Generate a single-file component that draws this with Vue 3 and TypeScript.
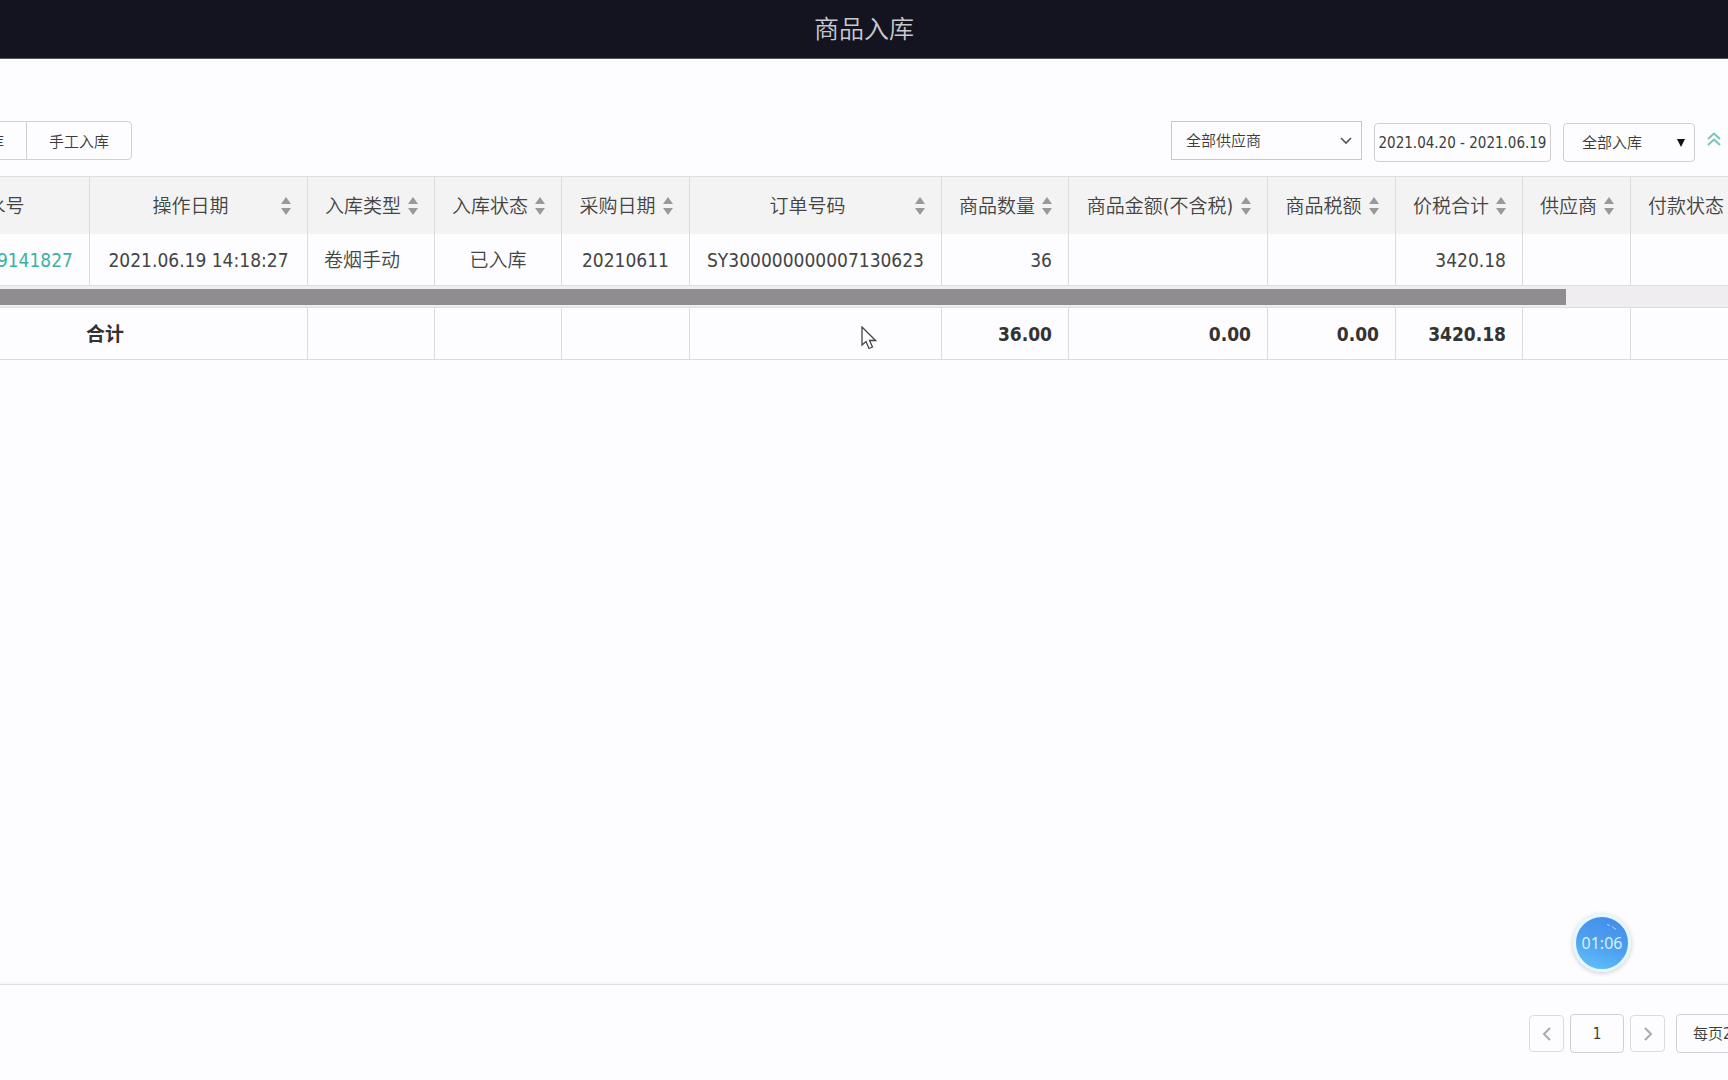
<script setup lang="ts">
import { ref } from 'vue'

interface Column {
  key: string
  title: string
  width?: number
  align: 'left' | 'center' | 'right'
  value: string
  total: string
  sortable: boolean
}

const columns: Column[] = [
  { key: 'serial', title: '流水号', width: 187, align: 'right', value: '20210619141827', total: '', sortable: false },
  { key: 'time', title: '操作日期', width: 218, align: 'center', value: '2021.06.19 14:18:27', total: '', sortable: true },
  { key: 'type', title: '入库类型', width: 127, align: 'left', value: '卷烟手动', total: '', sortable: true },
  { key: 'state', title: '入库状态', width: 127, align: 'center', value: '已入库', total: '', sortable: true },
  { key: 'date', title: '采购日期', width: 128, align: 'center', value: '20210611', total: '', sortable: true },
  { key: 'order', title: '订单号码', width: 252, align: 'center', value: 'SY300000000007130623', total: '', sortable: true },
  { key: 'count', title: '商品数量', width: 127, align: 'right', value: '36', total: '36.00', sortable: true },
  { key: 'amount', title: '商品金额(不含税)', width: 199, align: 'right', value: '', total: '0.00', sortable: true },
  { key: 'tax', title: '商品税额', width: 128, align: 'right', value: '', total: '0.00', sortable: true },
  { key: 'sum', title: '价税合计', width: 127, align: 'right', value: '3420.18', total: '3420.18', sortable: true },
  { key: 'supplier', title: '供应商', width: 108, align: 'center', value: '', total: '', sortable: true },
  { key: 'payment', title: '付款状态', align: 'center', value: '', total: '', sortable: true },
]

const totals = columns.slice(2)
const supplier = ref('全部供应商')
const period = ref('2021.04.20 - 2021.06.19')
const kind = ref('全部入库')
const page = ref('1')
const pageSize = ref('每页20条')
</script>

<template>
  <div class="app">
    <header class="titlebar"><h1>商品入库</h1></header>

    <div class="toolbar">
      <div class="actions">
        <button type="button">订单入库</button>
        <button type="button">手工入库</button>
      </div>
      <form class="filters" @submit.prevent>
        <div class="picker supplier">
          <select v-model="supplier" aria-label="供应商">
            <option>全部供应商</option>
          </select>
          <svg width="12" height="8" viewBox="0 0 12 8"><path d="M1 1l5 5 5-5" fill="none" stroke="#555" stroke-width="1.600" /></svg>
        </div>
        <input v-model="period" class="period" type="text" aria-label="日期范围" />
        <div class="picker kind">
          <select v-model="kind" aria-label="入库类型">
            <option>全部入库</option>
          </select>
          <svg width="8" height="8" viewBox="0 0 8 8"><path d="M0 0h8L4 8z" fill="#111" /></svg>
        </div>
        <button type="button" class="collapse" aria-label="收起">
          <svg width="14" height="14" viewBox="0 0 14 14"><path d="M1 7l6-5.500 6 5.500M1 13l6-5.500 6 5.500" fill="none" stroke="#79c5bd" stroke-width="2" /></svg>
        </button>
      </form>
    </div>

    <main class="content">
      <div class="grid">
        <table>
          <colgroup>
            <col v-for="c in columns" :key="c.key" :style="c.width ? { width: c.width + 'px' } : {}" />
          </colgroup>
          <thead>
            <tr>
              <th v-for="c in columns" :key="c.key" scope="col">
                <div class="head">
                  <span class="label">{{ c.title }}</span>
                  <svg v-if="c.sortable" width="10" height="18" viewBox="0 0 10 18"><path d="M0 7l5-7 5 7zM0 11h10l-5 7z" fill="#999" /></svg>
                </div>
              </th>
            </tr>
          </thead>
          <tbody>
            <tr>
              <td v-for="c in columns" :key="c.key" :class="c.align">
                <a v-if="c.key === 'serial'" href="#">{{ c.value }}</a>
                <template v-else>{{ c.value }}</template>
              </td>
            </tr>
          </tbody>
        </table>
      </div>
      <div class="track"><div class="thumb"></div></div>
      <div class="grid totals">
        <table>
          <colgroup>
            <col v-for="c in columns" :key="c.key" :style="c.width ? { width: c.width + 'px' } : {}" />
          </colgroup>
          <tbody>
            <tr>
              <th colspan="2" scope="row">合计</th>
              <td v-for="c in totals" :key="c.key" class="right">{{ c.total }}</td>
            </tr>
          </tbody>
        </table>
      </div>
    </main>

    <footer class="pager">
      <button type="button" class="step" aria-label="上一页">
        <svg width="10" height="14" viewBox="0 0 10 14"><path d="M8 1L2 7l6 6" fill="none" stroke="#aaa" stroke-width="2" /></svg>
      </button>
      <input v-model="page" class="page" type="text" aria-label="页码" />
      <button type="button" class="step" aria-label="下一页">
        <svg width="10" height="14" viewBox="0 0 10 14"><path d="M2 1l6 6-6 6" fill="none" stroke="#aaa" stroke-width="2" /></svg>
      </button>
      <select v-model="pageSize" class="size" aria-label="每页条数">
        <option>每页20条</option>
      </select>
    </footer>

    <div class="timer">
      <svg class="shine" width="12" height="8" viewBox="0 0 12 8"><path d="M1 1.500l3 1M6 3.500l4 3" fill="none" stroke="#a9d6fb" stroke-width="1" /></svg>
      01:06
    </div>
    <svg class="cursor" width="16" height="24" viewBox="0 0 16 24"><path d="M1 1v18l4-3.500 3 7 3.500-1.500-3-6.500h6z" fill="#fdfcfe" stroke="#444" stroke-width="1.300" /></svg>
  </div>
</template>

<style>
body {
  margin: 0;
  background: #fdfcfe;
}
</style>

<style scoped>
.app {
  position: relative;
  display: flex;
  flex-direction: column;
  min-height: 100vh;
  overflow: hidden;
  color: #444;
  font-family: 'DejaVu Sans Condensed', 'Noto Sans CJK SC', sans-serif;
  font-size: 19px;
  font-weight: 350;
}
button,
input,
select {
  box-sizing: border-box;
  margin: 0;
  border: 1px solid #d0d0d4;
  border-radius: 4px;
  background: #fdfcfe;
  color: #3c3c3c;
  font-family: inherit;
  font-size: 15px;
  font-weight: 350;
  appearance: none;
}
svg {
  flex: none;
  display: block;
}
.titlebar {
  display: flex;
  align-items: center;
  justify-content: center;
  box-sizing: border-box;
  height: 59px;
  padding-top: 2px;
  border-bottom: 1px solid #55555c;
  background: #141420;
}
h1 {
  margin: 0;
  color: #c8c8ce;
  font-size: 25px;
  font-weight: 350;
  line-height: 36px;
}
.toolbar {
  display: flex;
  justify-content: space-between;
  align-items: flex-start;
  padding: 62px 7px 14px 0;
}
.actions {
  display: flex;
  margin-left: -79px;
}
.actions button {
  width: 106px;
  height: 39px;
  padding: 0;
  border-radius: 0;
}
.actions button + button {
  margin-left: -1px;
  border-radius: 0 4px 4px 0;
}
.filters {
  display: flex;
  align-items: flex-end;
  gap: 12px;
}
.picker {
  position: relative;
}
.picker select {
  width: 100%;
  height: 39px;
}
.picker svg {
  position: absolute;
  top: 16px;
  right: 10px;
  pointer-events: none;
}
.supplier {
  width: 191px;
  align-self: flex-start;
}
.supplier select {
  border-radius: 0;
  padding: 0 14px;
  border-color: #c8c8cc;
}
.period {
  width: 177px;
  height: 39px;
  padding: 0;
  text-align: center;
}
.kind {
  width: 132px;
}
.kind select {
  padding: 0 18px;
}
.filters > * {
  margin-top: 2px;
}
.filters .supplier {
  margin-top: 0;
}
.filters .collapse {
  display: flex;
  align-self: flex-start;
  margin-top: 11px;
  padding: 0;
  border: 0;
}
.content {
  flex: 1;
}
.grid {
  overflow: hidden;
  border-top: 1px solid #dededf;
}
table {
  width: calc(100% + 127px);
  margin-left: -97px;
  table-layout: fixed;
  border-collapse: separate;
  border-spacing: 0;
}
th,
td {
  box-sizing: border-box;
  padding: 0 16px;
  border-right: 1px solid #dcdcdf;
  white-space: nowrap;
  line-height: 28px;
}
thead th {
  height: 57px;
  background: #f3f3f3;
  font-weight: 350;
}
td {
  height: 51px;
}
.head {
  display: flex;
  align-items: center;
  gap: 6px;
}
.label {
  flex: 1;
  text-align: center;
}
.left {
  text-align: left;
}
.center {
  text-align: center;
}
.right {
  text-align: right;
}
a {
  color: #3bb0a5;
  text-decoration: none;
}
.track {
  padding: 3px 0 2px;
  border-top: 1px solid #dededf;
  background: #efedf0;
}
.thumb {
  width: 90.600%;
  height: 16px;
  background: #8f8d90;
}
.totals {
  border-bottom: 1px solid #dcdcdf;
  color: #333;
}
.totals th,
.totals td {
  font-weight: 700;
}
.pager {
  display: flex;
  align-items: flex-start;
  justify-content: flex-end;
  gap: 6px;
  box-sizing: border-box;
  height: 96px;
  margin-right: -68px;
  padding-top: 29px;
  border-top: 1px solid #dededf;
  box-shadow: 0 -1px 2px #f1f0f2;
}
.step {
  display: flex;
  align-items: center;
  justify-content: center;
  width: 35px;
  height: 37px;
  margin-top: 1px;
  padding: 0;
  border-color: #dcdce0;
}
.page {
  width: 54px;
  height: 39px;
  padding: 0;
  text-align: center;
}
.size {
  width: 120px;
  height: 39px;
  margin-left: 5px;
  padding: 0 16px;
}
.timer {
  position: absolute;
  right: 97px;
  bottom: 108px;
  width: 52px;
  height: 52px;
  border: 3px solid #e4f8ff;
  border-radius: 50%;
  background: linear-gradient(200deg, #4389e8, #4c9ff0 50%, #62c4fa);
  box-shadow: 0 1px 5px #c9c9cf;
  color: #d8f0ff;
  font-family: 'Noto Sans', sans-serif;
  font-size: 16px;
  font-weight: 400;
  line-height: 52px;
  text-align: center;
}
.shine {
  position: absolute;
  top: 6px;
  right: 10px;
}
.cursor {
  position: absolute;
  top: 326px;
  left: 861px;
}
</style>
